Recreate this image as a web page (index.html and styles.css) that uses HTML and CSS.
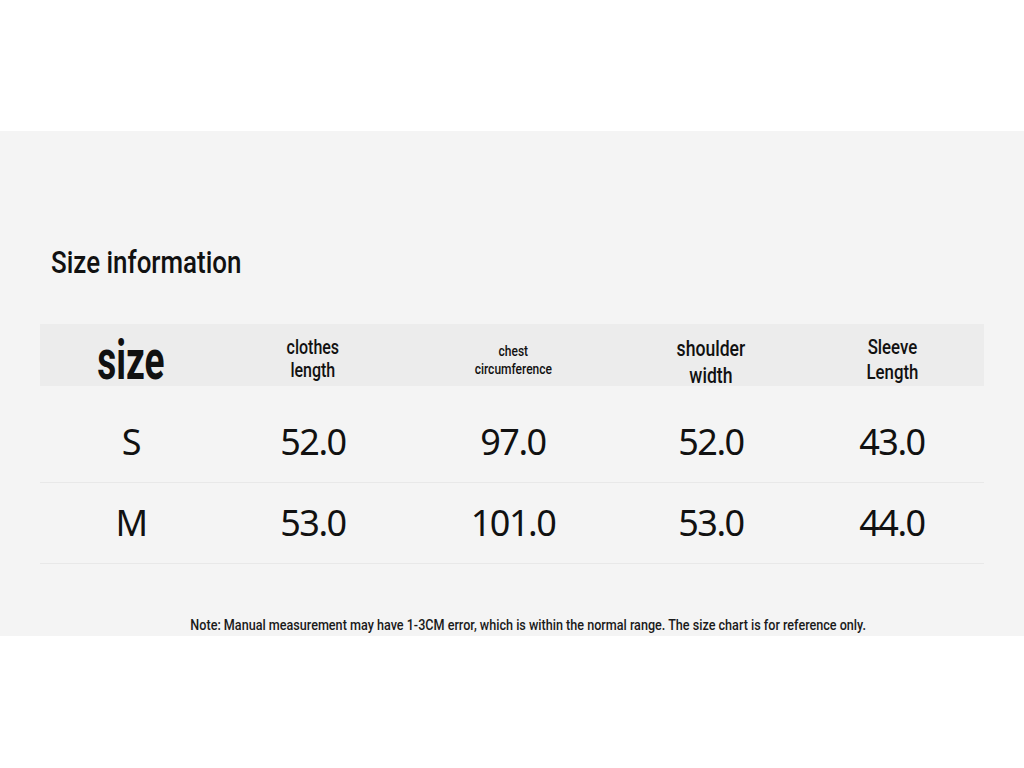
FILE: index.html
```html
<!DOCTYPE html>
<html lang="en">
<head>
<meta charset="utf-8">
<title>Size information</title>
<link rel="stylesheet" href="styles.css">
</head>
<body>
<div class="top-space"></div>
<section class="panel">
  <h1 class="title"><span class="narrow title-text">Size information</span></h1>
  <div class="table">
    <div class="head">
      <div class="hcell c-size"><span class="size-word">size</span></div>
      <div class="hcell c-len"><span class="narrow">clothes<br>length</span></div>
      <div class="hcell c-chest"><span class="narrow">chest<br>circumference</span></div>
      <div class="hcell c-shoulder"><span class="narrow">shoulder<br>width</span></div>
      <div class="hcell c-sleeve"><span class="narrow">Sleeve<br>Length</span></div>
    </div>
    <div class="row">
      <div class="cell">S</div>
      <div class="cell">52.0</div>
      <div class="cell">97.0</div>
      <div class="cell">52.0</div>
      <div class="cell">43.0</div>
    </div>
    <div class="row">
      <div class="cell">M</div>
      <div class="cell">53.0</div>
      <div class="cell">101.0</div>
      <div class="cell">53.0</div>
      <div class="cell">44.0</div>
    </div>
  </div>
  <p class="note"><span class="narrow note-text">Note: Manual measurement may have 1-3CM error, which is within the normal range. The size chart is for reference only.</span></p>
</section>
</body>
</html>
```
FILE: styles.css
```css
html, body {
  margin: 0;
  padding: 0;
  background: #ffffff;
}
body {
  width: 1024px;
  height: 768px;
  overflow: hidden;
}
.top-space {
  height: 131px;
}
.panel {
  background: #f4f4f4;
  height: 505px;
  padding: 0 40px;
  box-sizing: border-box;
  display: flex;
  flex-direction: column;
  font-family: "Roboto", "Liberation Sans", sans-serif;
  color: #111;
}
.narrow {
  display: inline-block;
  white-space: nowrap;
  transform: scaleX(0.8);
  transform-origin: center;
  font-weight: 500;
}
.title {
  margin: 111px 0 0 11px;
  font-size: 32px;
  line-height: 40px;
  font-weight: normal;
  color: #111;
}
.title-text {
  transform-origin: left center;
  transform: scaleX(0.81);
}
.table {
  margin-top: 42px;
  width: 944px;
}
.head,
.row {
  display: grid;
  grid-template-columns: 182px 182px 218px 178px 184px;
}
.head {
  background: #ececec;
  height: 62px;
  grid-template-rows: 62px;
  margin-bottom: 16px;
}
.hcell {
  display: flex;
  align-items: flex-start;
  justify-content: center;
  text-align: center;
  box-sizing: border-box;
  color: #111;
}
.c-size {
  align-items: flex-end;
}
.size-word {
  display: inline-block;
  font-size: 56px;
  line-height: 56px;
  font-weight: bold;
  transform: scaleX(0.66);
  margin-bottom: -2px;
}
.c-len {
  font-size: 20px;
  line-height: 23px;
  padding-top: 11.5px;
}
.c-chest {
  font-size: 15px;
  line-height: 18px;
  padding-top: 18px;
}
.c-shoulder {
  font-size: 22px;
  line-height: 27px;
  padding-top: 10.5px;
}
.c-sleeve {
  font-size: 21px;
  line-height: 25px;
  padding-top: 11px;
}
.row {
  height: 80px;
  border-bottom: 1px solid #e8e8e8;
}
.cell {
  display: flex;
  align-items: center;
  justify-content: center;
  padding-bottom: 2px;
  font-family: "Noto Sans", "Open Sans", sans-serif;
  font-size: 36px;
  letter-spacing: -1.5px;
  color: #111;
}
.note {
  margin: 51px 0 0 0;
  padding-left: 32px;
  text-align: center;
  font-size: 15px;
  line-height: 20px;
  color: #1a1a1a;
}
.note-text {
  transform: scaleX(0.84);
}
```
